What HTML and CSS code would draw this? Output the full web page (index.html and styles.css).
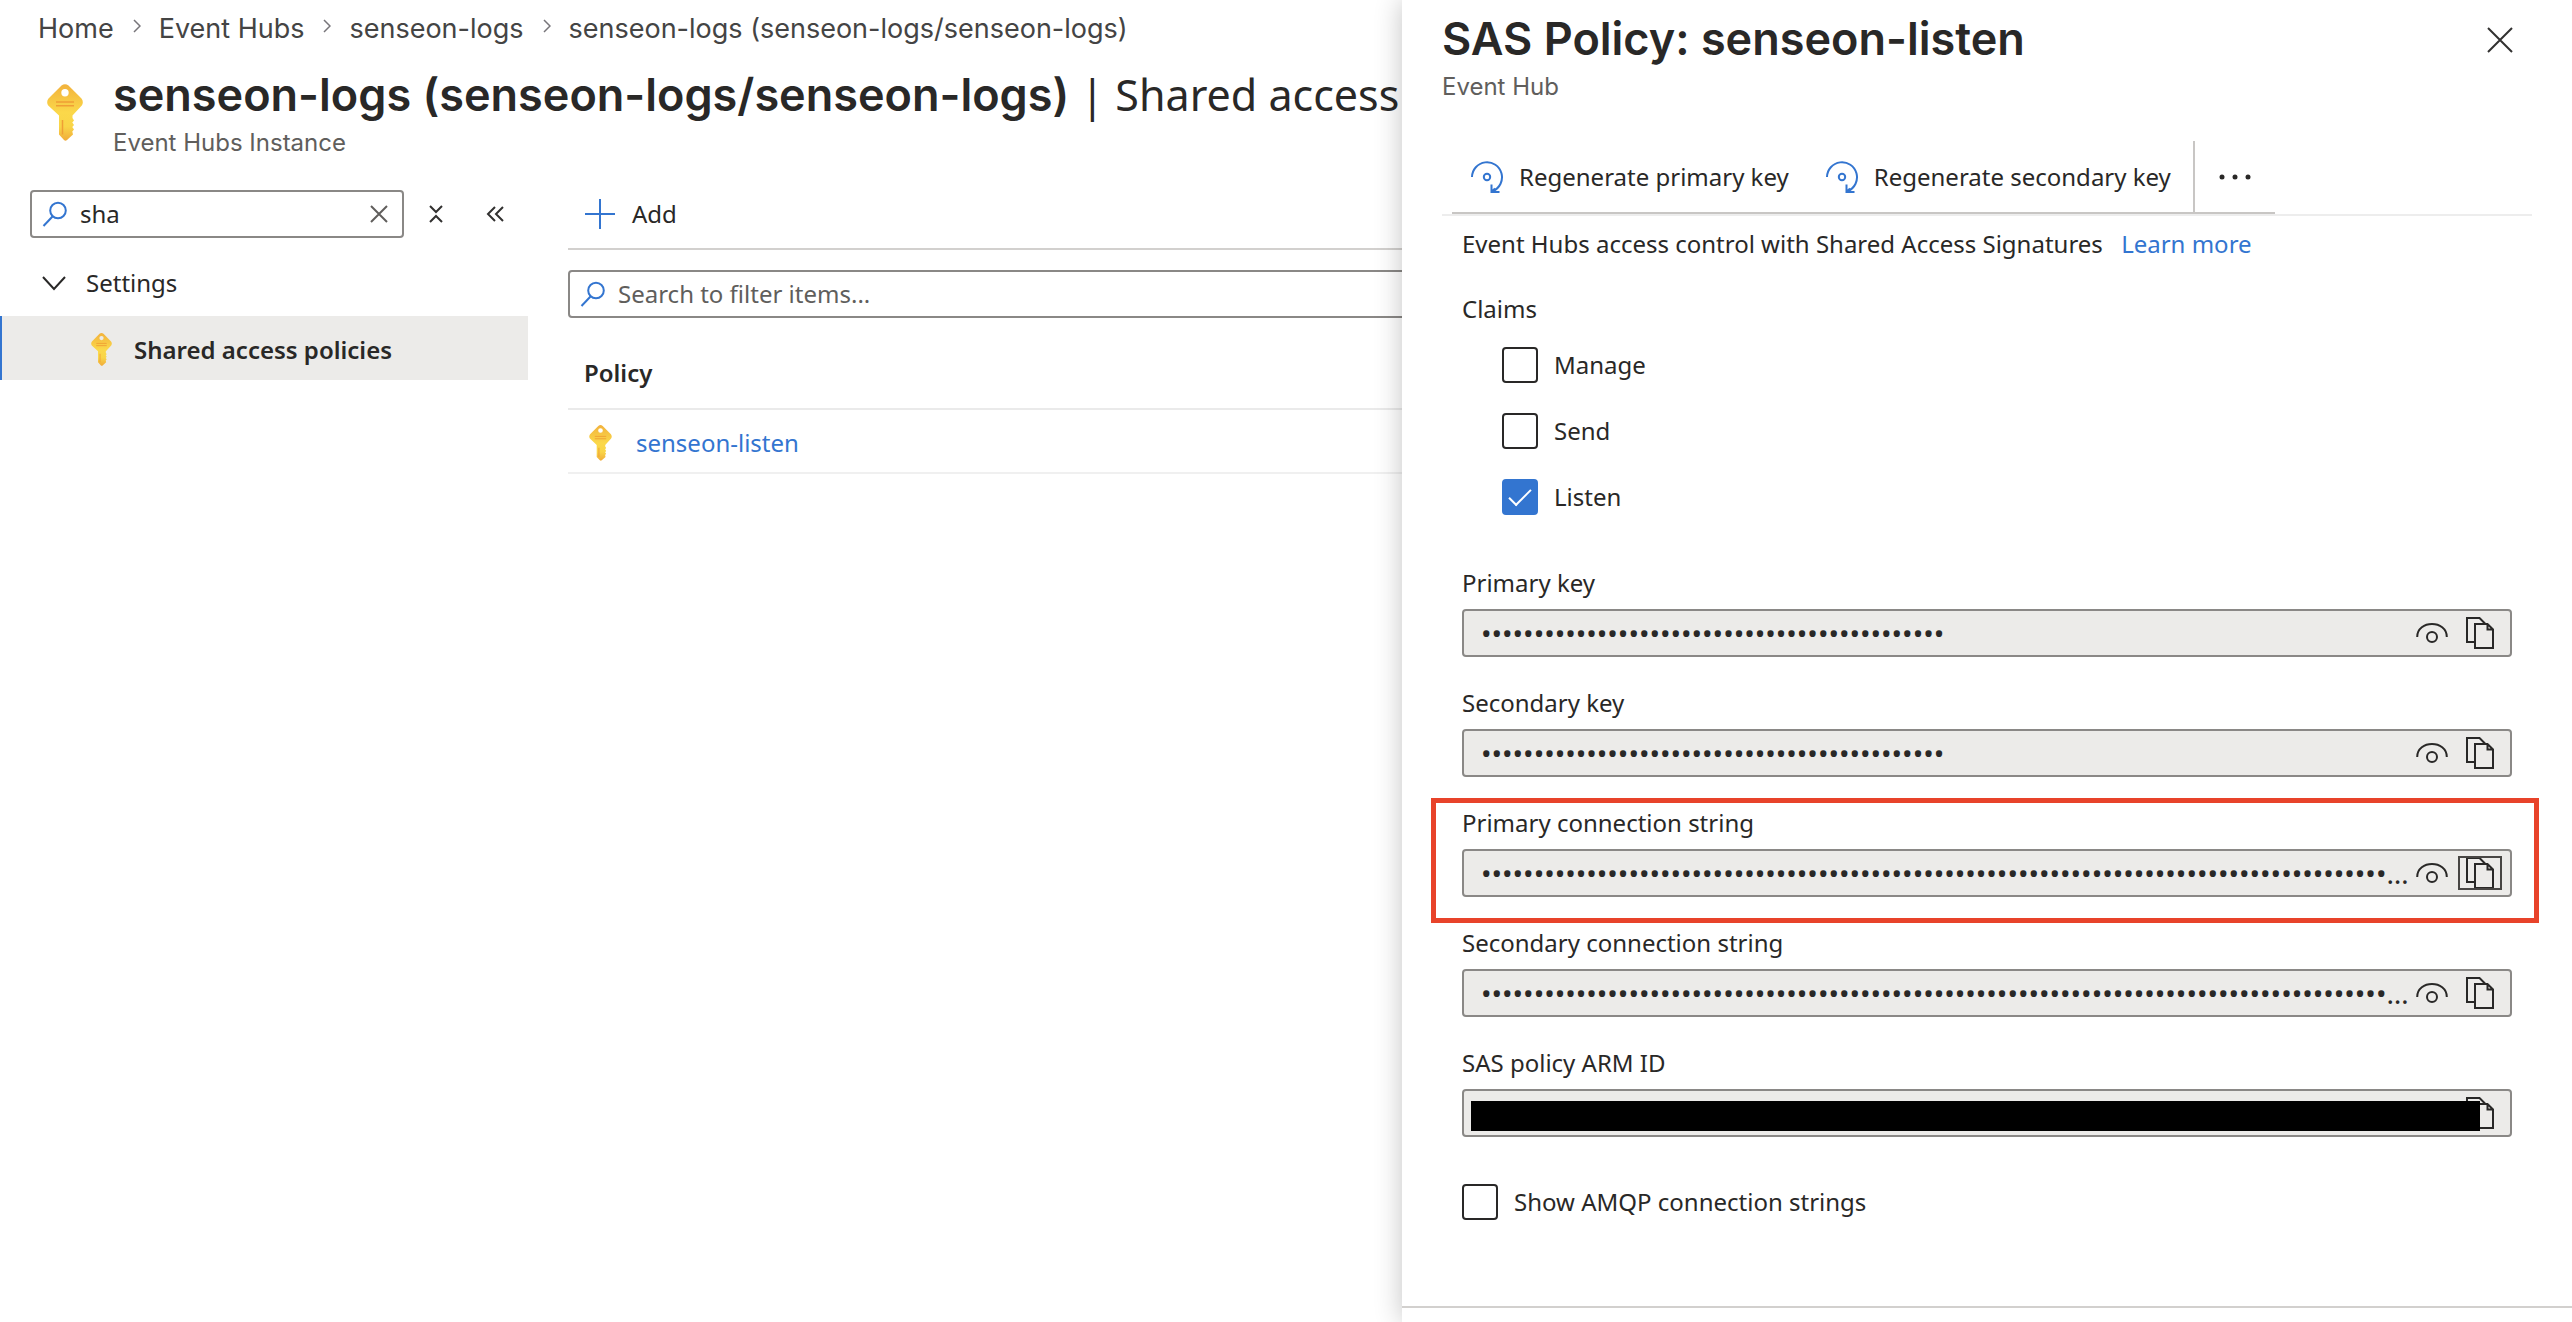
FILE: index.html
```
<!DOCTYPE html>
<html lang="en">
<head>
<meta charset="utf-8">
<meta name="viewport" content="width=device-width, initial-scale=1">
<title>SAS Policy: senseon-listen</title>
<link rel="stylesheet" href="styles.css">
</head>
<body>
<svg class="sprite" aria-hidden="true">
  <defs>
    <linearGradient id="gold" x1="0" y1="0" x2="0" y2="1">
      <stop offset="0" stop-color="#f2b23c"/>
      <stop offset=".5" stop-color="#fbd84a"/>
      <stop offset=".75" stop-color="#f9d548"/>
      <stop offset="1" stop-color="#f0ab3a"/>
    </linearGradient>
    <symbol id="key" viewBox="0 0 36 57">
      <path fill="url(#gold)" fill-rule="evenodd" d="M14.500 1.500Q18-1.200 21.500 1.500L34.500 14.500Q37 18 34.800 21.500L25.500 31.500V34L27 36.500 25.300 38.500 27 41 25.300 43 27 45.500 25.300 47.500 26 50.500 20 56Q18.500 57.500 17 56L12 50.500V31.500L1.200 21.500Q-1 18 1.500 14.500ZM18 5a3.700 3.700 0 1 0 0 7.400 3.700 3.700 0 1 0 0-7.400Z"/>
      <path stroke="#ef9f35" stroke-width="1.500" fill="none" d="M9 18H27M9 21.800H27M15.500 36V50.500"/>
    </symbol>
    <symbol id="search" viewBox="0 0 26 26"><g fill="none" stroke="#3375d0" stroke-width="2"><circle cx="16" cy="9.500" r="7.800"/><path d="M10.500 15.500 1.500 25"/></g></symbol>
    <symbol id="regen" viewBox="0 0 34 34"><g fill="none" stroke="#3375d0" stroke-width="2"><path d="M2 17A15 15 0 1 1 23 31"/><path d="M21.500 24.500V32H29.500M21.500 32 25 28.500"/><circle cx="17" cy="17" r="3.200"/></g></symbol>
    <symbol id="crumb" viewBox="0 0 8 14"><path fill="none" stroke="#77757a" stroke-width="1.500" d="M1 1 7 7 1 13"/></symbol>
    <symbol id="eye" viewBox="0 0 32 20"><g fill="none" stroke="#292827" stroke-width="2"><path d="M1.200 14C1.200-3.200 30.800-3.200 30.800 14"/><circle cx="16" cy="14" r="5"/></g></symbol>
    <symbol id="copy" viewBox="0 0 28 32"><g fill="none" stroke="#292827" stroke-width="2"><path d="M8.500 25H1V1H13.500L19 6.500"/><path d="M9 7H21.500L27 12.500V31H9ZM21.500 7V12.500H27"/></g></symbol>
  </defs>
</svg>

<main class="page">
  <header class="page-header">
    <nav aria-label="Breadcrumb">
      <ol class="breadcrumb">
        <li><a href="#home">Home</a><svg class="crumb"><use href="#crumb"/></svg></li>
        <li><a href="#hubs">Event Hubs</a><svg class="crumb"><use href="#crumb"/></svg></li>
        <li><a href="#namespace">senseon-logs</a><svg class="crumb"><use href="#crumb"/></svg></li>
        <li><a href="#instance">senseon-logs (senseon-logs/senseon-logs)</a></li>
      </ol>
    </nav>
    <div class="heading">
      <svg class="heading-icon"><use href="#key"/></svg>
      <div>
        <h1 class="title">senseon-logs (senseon-logs/senseon-logs)<span class="title-section"> | Shared access</span></h1>
        <p class="subtitle">Event Hubs Instance</p>
      </div>
    </div>
  </header>

  <div class="columns">
    <aside class="sidebar">
      <div class="menu-tools">
        <div class="searchbox">
          <svg class="search-icon"><use href="#search"/></svg>
          <input class="search-input" type="text" value="sha" aria-label="Search menu">
          <button class="icon-button" type="button" aria-label="Clear search">
            <svg width="18" height="18" viewBox="0 0 18 18" fill="none" stroke="#605e5c" stroke-width="2"><path d="M1 1 17 17M17 1 1 17"/></svg>
          </button>
        </div>
        <button class="icon-button" type="button" aria-label="Collapse groups">
          <svg width="14" height="18" viewBox="0 0 14 18" fill="none" stroke="#323130" stroke-width="2"><path d="M1 1 7 7 13 1M1 17 7 11 13 17"/></svg>
        </button>
        <button class="icon-button" type="button" aria-label="Collapse menu">
          <svg width="18" height="16" viewBox="0 0 18 16" fill="none" stroke="#323130" stroke-width="2"><path d="M9 1 2 8 9 15M17 1 10 8 17 15"/></svg>
        </button>
      </div>
      <nav class="menu" aria-label="Resource menu">
        <button class="menu-group" type="button">
          <svg width="24" height="15" viewBox="0 0 24 15" fill="none" stroke="#292827" stroke-width="2"><path d="M1 1 12 13 23 1"/></svg>
          Settings
        </button>
        <a class="menu-item" href="#policies" aria-current="page"><svg class="menu-icon"><use href="#key"/></svg>Shared access policies</a>
      </nav>
    </aside>

    <section class="content">
      <div class="command-bar">
        <button class="command" type="button">
          <svg width="30" height="30" viewBox="0 0 30 30" fill="none" stroke="#3375d0" stroke-width="2"><path d="M15 0V30M0 15H30"/></svg>
          Add
        </button>
      </div>
      <div class="searchbox">
        <svg class="search-icon"><use href="#search"/></svg>
        <input class="search-input" type="text" placeholder="Search to filter items..." aria-label="Search to filter items">
      </div>
      <table class="policies">
        <thead><tr><th scope="col">Policy</th></tr></thead>
        <tbody><tr><td><a class="policy-link" href="#senseon-listen"><svg class="policy-icon"><use href="#key"/></svg>senseon-listen</a></td></tr></tbody>
      </table>
    </section>
  </div>
</main>

<aside class="panel" aria-labelledby="panel-title">
  <header class="panel-header">
    <div>
      <h2 class="title" id="panel-title">SAS Policy: senseon-listen</h2>
      <p class="subtitle">Event Hub</p>
    </div>
    <button class="icon-button" type="button" aria-label="Close">
      <svg width="26" height="26" viewBox="0 0 26 26" fill="none" stroke="#323130" stroke-width="2"><path d="M1 1 25 25M25 1 1 25"/></svg>
    </button>
  </header>

  <div class="panel-toolbar">
    <div class="toolbar-actions">
      <button class="command" type="button"><svg class="regen-icon"><use href="#regen"/></svg>Regenerate primary key</button>
      <button class="command" type="button"><svg class="regen-icon"><use href="#regen"/></svg>Regenerate secondary key</button>
      <button class="more" type="button" aria-label="More commands">
        <svg width="32" height="6" viewBox="0 0 32 6" fill="#292827"><circle cx="3" cy="3" r="2.500"/><circle cx="16" cy="3" r="2.500"/><circle cx="29" cy="3" r="2.500"/></svg>
      </button>
    </div>
  </div>

  <form class="panel-form">
    <p class="intro">Event Hubs access control with Shared Access Signatures <a class="learn-more" href="#learn">Learn more</a></p>

    <fieldset class="claims">
      <legend>Claims</legend>
      <div class="claim-list">
        <label class="check"><input type="checkbox">Manage</label>
        <label class="check"><input type="checkbox">Send</label>
        <label class="check"><input type="checkbox" checked>Listen</label>
      </div>
    </fieldset>

    <div class="fields">
      <div class="field">
        <label for="primary-key">Primary key</label>
        <div class="secret">
          <input id="primary-key" type="password" readonly value="00000000000000000000000000000000000000000000">
          <button class="icon-button" type="button" aria-label="Show primary key"><svg class="eye"><use href="#eye"/></svg></button>
          <button class="copy-button" type="button" aria-label="Copy primary key"><svg class="copy"><use href="#copy"/></svg></button>
        </div>
      </div>
      <div class="field">
        <label for="secondary-key">Secondary key</label>
        <div class="secret">
          <input id="secondary-key" type="password" readonly value="00000000000000000000000000000000000000000000">
          <button class="icon-button" type="button" aria-label="Show secondary key"><svg class="eye"><use href="#eye"/></svg></button>
          <button class="copy-button" type="button" aria-label="Copy secondary key"><svg class="copy"><use href="#copy"/></svg></button>
        </div>
      </div>
      <div class="field field-highlight">
        <label for="primary-connection">Primary connection string</label>
        <div class="secret">
          <input id="primary-connection" type="password" readonly value="000000000000000000000000000000000000000000000000000000000000000000000000000000000000000000000000000000000000">
          <button class="icon-button" type="button" aria-label="Show primary connection string"><svg class="eye"><use href="#eye"/></svg></button>
          <button class="copy-button is-focused" type="button" aria-label="Copy primary connection string"><svg class="copy"><use href="#copy"/></svg></button>
        </div>
      </div>
      <div class="field">
        <label for="secondary-connection">Secondary connection string</label>
        <div class="secret">
          <input id="secondary-connection" type="password" readonly value="000000000000000000000000000000000000000000000000000000000000000000000000000000000000000000000000000000000000">
          <button class="icon-button" type="button" aria-label="Show secondary connection string"><svg class="eye"><use href="#eye"/></svg></button>
          <button class="copy-button" type="button" aria-label="Copy secondary connection string"><svg class="copy"><use href="#copy"/></svg></button>
        </div>
      </div>
      <div class="field">
        <label for="arm-id">SAS policy ARM ID</label>
        <div class="secret redacted">
          <input id="arm-id" type="text" readonly>
          <button class="copy-button" type="button" aria-label="Copy SAS policy ARM ID"><svg class="copy"><use href="#copy"/></svg></button>
        </div>
      </div>
    </div>

    <label class="check"><input type="checkbox">Show AMQP connection strings</label>
  </form>

  <footer class="panel-footer"></footer>
</aside>
</body>
</html>
```
FILE: styles.css
```
:root {
  --text: #292827;
  --muted: #605e5c;
  --accent: #3375d0;
  --border: #8a8886;
  --line: #d2d0ce;
  --fill: #ecebe9;
  --body-font: "Noto Sans", "Open Sans", sans-serif;
  --heading-font: Inter, "Liberation Sans", sans-serif;
}

* { box-sizing: border-box; }

body {
  margin: 0;
  min-height: 100vh;
  overflow: hidden;
  background: #fff;
  color: var(--text);
  font: 24px/32px var(--body-font);
}

h1, h2, p, ol, fieldset, legend { margin: 0; padding: 0; border: 0; }
a { color: inherit; text-decoration: none; }
svg { display: block; flex: none; }
button {
  padding: 0;
  border: 0;
  background: none;
  color: inherit;
  font: inherit;
  text-align: left;
}
input { font: inherit; color: inherit; }
.sprite { position: absolute; width: 0; height: 0; }

/* Page header */
.page-header { padding: 11px 0 31px 38px; }

.breadcrumb {
  display: flex;
  gap: 18px;
  list-style: none;
  color: #444;
  font: 27px/36px var(--heading-font);
  white-space: nowrap;
}
.breadcrumb li { display: flex; gap: 19px; }
.crumb { width: 8px; height: 14px; margin-top: 8px; }

.heading { display: flex; gap: 30px; padding: 20px 0 0 9px; }
.heading-icon { width: 36px; height: 57px; margin-top: 17px; }

.title {
  font: 600 45px/56px var(--heading-font);
  white-space: nowrap;
}
.title-section { font: 43px/56px var(--body-font); }
.subtitle {
  margin-top: 4px;
  color: var(--muted);
  font: 24px/32px var(--heading-font);
}

/* Two-column body */
.columns { display: grid; grid-template-columns: 528px 1fr; gap: 40px; }

.menu-tools {
  display: flex;
  align-items: center;
  gap: 25px;
  padding: 0 24px 0 30px;
}
.searchbox {
  display: flex;
  align-items: center;
  flex: 1;
  min-width: 0;
  height: 48px;
  padding: 0 14px 0 10px;
  border: 2px solid var(--border);
  border-radius: 4px;
}
.search-icon { width: 26px; height: 26px; }
.search-input {
  flex: 1;
  min-width: 0;
  padding: 0 0 0 12px;
  border: 0;
  outline: 0;
  background: none;
}
.search-input::placeholder { color: var(--muted); opacity: 1; }
.menu-tools > .icon-button:last-child { margin-left: 18px; }

.menu { padding-top: 12px; }
.menu-group {
  display: flex;
  align-items: center;
  gap: 20px;
  width: 100%;
  height: 66px;
  padding-left: 42px;
}
.menu-item {
  display: flex;
  align-items: center;
  gap: 22px;
  height: 64px;
  padding: 3px 0 0 89px;
  border-left: 2px solid var(--accent);
  background: var(--fill);
  font-weight: 600;
}
.menu-icon { width: 21px; height: 33px; }

.content { min-width: 0; }
.command-bar {
  padding: 0 0 10px 17px;
  margin-bottom: 20px;
  border-bottom: 2px solid var(--line);
}
.command { display: flex; align-items: center; gap: 17px; height: 48px; }

.policies { width: 100%; margin-top: 20px; border-collapse: collapse; }
.policies th, .policies td {
  padding: 0 0 0 16px;
  text-align: left;
}
.policies th { height: 71px; border-bottom: 2px solid #eaeaea; font-weight: 600; }
.policies td { height: 64px; padding-top: 4px; border-bottom: 2px solid #f0f0f0; }
.policy-link {
  display: flex;
  align-items: center;
  gap: 24px;
  padding-left: 5px;
  color: var(--accent);
}
.policy-icon { width: 23px; height: 36px; }

/* Side panel, over the page */
.panel {
  position: absolute;
  top: 0;
  right: 0;
  display: flex;
  flex-direction: column;
  width: 1170px;
  max-width: 100%;
  min-height: 100vh;
  background: #fff;
  box-shadow: 0 0 26px rgba(0, 0, 0, .24);
}
.panel-header {
  display: flex;
  justify-content: space-between;
  align-items: flex-start;
  padding: 11px 59px 38px 40px;
}
.panel-header .icon-button { margin-top: 16px; }

.panel-toolbar {
  margin: 0 40px;
  padding-left: 10px;
  border-bottom: 2px solid #ededed;
}
.toolbar-actions {
  display: flex;
  align-items: center;
  gap: 36px;
  width: max-content;
  padding-left: 18px;
  border-bottom: 2px solid #c8c6c4;
}
.toolbar-actions .command { gap: 15px; }
.regen-icon { width: 34px; height: 34px; }
.more {
  display: grid;
  place-items: center;
  width: 82px;
  height: 71px;
  margin-left: -14px;
  border-left: 2px solid #c8c6c4;
}

.panel-form { flex: 1; padding: 12px 60px; }
.learn-more { margin-left: 12px; color: var(--accent); }

.claims { margin-top: 33px; }
.claim-list {
  display: grid;
  gap: 30px;
  padding: 22px 0 0 40px;
}
.check {
  display: flex;
  align-items: center;
  gap: 16px;
  width: max-content;
  height: 36px;
}
.check input {
  appearance: none;
  width: 36px;
  height: 36px;
  margin: 0;
  border: 2px solid var(--text);
  border-radius: 4px;
}
.check input:checked {
  display: grid;
  place-items: center;
  border-color: var(--accent);
  background: var(--accent);
}
.check input:checked::before {
  content: "";
  width: 20px;
  height: 9px;
  margin-bottom: 6px;
  border: solid #fff;
  border-width: 0 0 2px 2px;
  rotate: -45deg;
}

.fields { display: grid; gap: 30px; padding: 52px 0 47px; }
.field { position: relative; }
.field label { display: block; margin-bottom: 10px; }
.field-highlight::after {
  content: "";
  position: absolute;
  inset: -9px -27px -26px -31px;
  border: 5px solid #e8432a;
  pointer-events: none;
}
.secret {
  position: relative;
  display: flex;
  align-items: center;
  height: 48px;
  padding: 0 8px 0 17px;
  border: 2px solid var(--border);
  border-radius: 4px;
  background: var(--fill);
}
.secret input {
  flex: 1;
  min-width: 0;
  padding: 0;
  border: 0;
  outline: 0;
  background: none;
  font-size: 28px;
  text-overflow: ellipsis;
}
.eye { width: 32px; height: 20px; }
.copy { width: 28px; height: 32px; }
.copy-button {
  display: grid;
  place-items: center;
  width: 44px;
  height: 34px;
  margin-left: 10px;
}
.copy-button.is-focused { outline: 2px solid #484644; outline-offset: -2px; }
.redacted::after {
  content: "";
  position: absolute;
  inset: 10px 30px 4px 7px;
  background: #000;
}

.panel-footer { height: 16px; border-top: 2px solid var(--line); }
```
